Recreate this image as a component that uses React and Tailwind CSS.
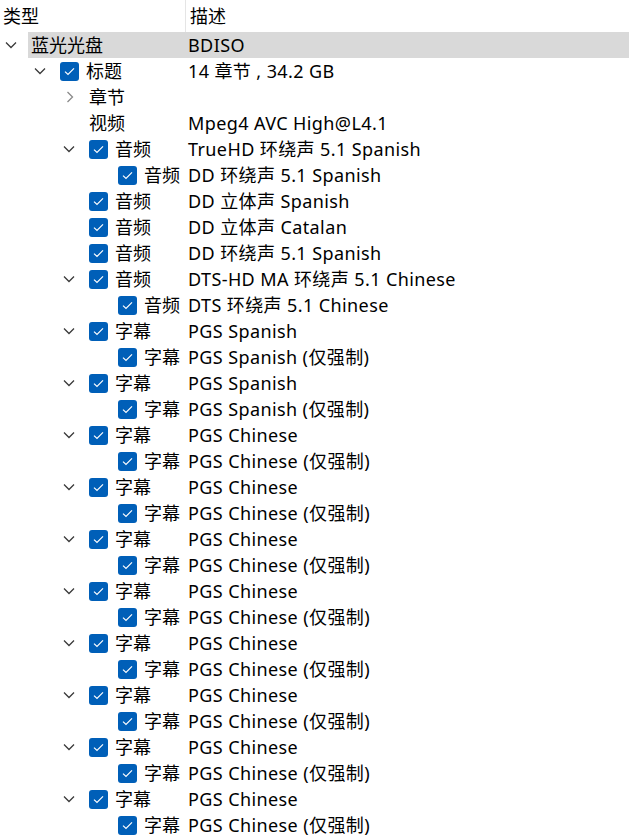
const rows = [
  { level: 0, exp: "open", label: "蓝光光盘", desc: "BDISO", selected: true },
  { level: 1, exp: "open", check: true, label: "标题", desc: "14 章节 , 34.2 GB" },
  { level: 2, exp: "closed", label: "章节", desc: "" },
  { level: 2, label: "视频", desc: "Mpeg4 AVC High@L4.1" },
  { level: 2, exp: "open", check: true, label: "音频", desc: "TrueHD 环绕声 5.1 Spanish" },
  { level: 3, check: true, label: "音频", desc: "DD 环绕声 5.1 Spanish" },
  { level: 2, check: true, label: "音频", desc: "DD 立体声 Spanish" },
  { level: 2, check: true, label: "音频", desc: "DD 立体声 Catalan" },
  { level: 2, check: true, label: "音频", desc: "DD 环绕声 5.1 Spanish" },
  { level: 2, exp: "open", check: true, label: "音频", desc: "DTS-HD MA 环绕声 5.1 Chinese" },
  { level: 3, check: true, label: "音频", desc: "DTS 环绕声 5.1 Chinese" },
];

const subs = ["Spanish", "Spanish", "Chinese", "Chinese", "Chinese", "Chinese", "Chinese", "Chinese", "Chinese", "Chinese"];
subs.forEach((lang) => {
  rows.push({ level: 2, exp: "open", check: true, label: "字幕", desc: `PGS ${lang}` });
  rows.push({ level: 3, check: true, label: "字幕", desc: `PGS ${lang} (仅强制)` });
});

const indent = { 0: "w-0", 1: "w-[29px]", 2: "w-[58px]", 3: "w-[87px]" };

function Chevron({ exp }) {
  if (exp === "open")
    return (
      <svg width="12" height="8" viewBox="0 0 12 8" className="ml-[5px]">
        <path d="M1 1.5 L6 6.5 L11 1.5" fill="none" stroke="#3a3a3a" strokeWidth="1.3" />
      </svg>
    );
  if (exp === "closed")
    return (
      <svg width="8" height="12" viewBox="0 0 8 12" className="ml-[8px]">
        <path d="M1.5 1 L6.5 6 L1.5 11" fill="none" stroke="#8a8a8a" strokeWidth="1.3" />
      </svg>
    );
  return null;
}

function Check() {
  return (
    <span className="mr-[7px] flex h-[19px] w-[19px] shrink-0 items-center justify-center rounded-[3px] bg-[#005fb8]">
      <svg width="11" height="9" viewBox="0 0 11 9">
        <path d="M1 4.6 L4 7.4 L10 1.4" fill="none" stroke="#fff" strokeWidth="1.2" />
      </svg>
    </span>
  );
}

function Row({ row }) {
  const bg = row.selected ? "bg-[#d9d9d9]" : "";
  return (
    <div className="flex h-[26px] items-stretch">
      <div className="flex w-[186px] shrink-0 items-stretch">
        <div className={`${indent[row.level]} shrink-0`} />
        <div className="flex w-[28px] shrink-0 items-center">
          <Chevron exp={row.exp} />
        </div>
        <div className={`flex min-w-0 flex-1 items-center whitespace-nowrap pl-[3px] ${bg}`}>
          {row.check && <Check />}
          <span className="pb-[1px]">{row.label}</span>
        </div>
      </div>
      <div className={`flex flex-1 items-center whitespace-nowrap pb-[1px] pl-[2px] tracking-[0.4px] ${bg}`}>{row.desc}</div>
    </div>
  );
}

export default function App() {
  return (
    <div className="h-[837px] w-[629px] overflow-hidden bg-white font-['Noto_Sans','Noto_Sans_CJK_SC',sans-serif] text-[18px] leading-none text-black">
      {/* Header */}
      <div className="flex h-[32px]">
        <div className="flex w-[186px] items-center border-r border-[#e5e5e5] pb-[1px] pl-[3px]">类型</div>
        <div className="flex flex-1 items-center pb-[1px] pl-[4px]">描述</div>
      </div>
      {rows.map((row, i) => (
        <Row key={i} row={row} />
      ))}
    </div>
  );
}
